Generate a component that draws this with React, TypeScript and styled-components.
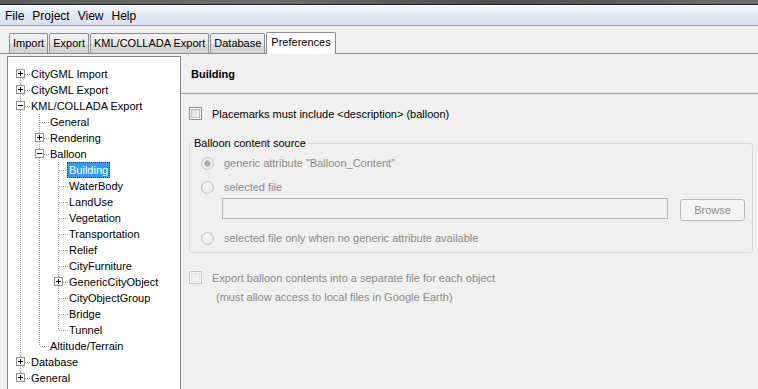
import React from 'react';
import styled, { createGlobalStyle, css } from 'styled-components';

const Global = createGlobalStyle`
  html, body { margin: 0; padding: 0; background: #f0f0f0; }
  body { font-family: "Liberation Sans", Arial, sans-serif; font-size: 11px; color: #000; overflow: hidden; }
  * { box-sizing: border-box; }
`;

const Window = styled.div`
  width: 758px;
  height: 389px;
  display: flex;
  flex-direction: column;
  overflow: hidden;
  background: #f0f0f0;
`;

const TitleStrip = styled.div`
  flex: none;
  height: 5px;
  background: linear-gradient(90deg, #5c5c5c, #6e6e6e 35%, #4e4e4e 65%, #707070);
  border-bottom: 1px solid #1e1e1e;
`;

const MenuBar = styled.div`
  flex: none;
  height: 21px;
  display: flex;
  align-items: center;
  padding: 1px 0 0 1px;
  background: linear-gradient(#f6f9fd, #e4ebf7 45%, #d6def2);
  border-bottom: 1px solid #a0a0a0;
  font-size: 12px;
`;

const MenuItem = styled.span`
  padding: 0 4px;
`;

const TabStrip = styled.div`
  flex: none;
  height: 28px;
  display: flex;
  align-items: flex-end;
  gap: 1px;
  padding-left: 9px;
  background: #efefef;
  border-bottom: 1px solid #898c95;
`;

const Tab = styled.div<{ $active?: boolean }>`
  height: 20px;
  padding: 3px 3px 0;
  border: 1px solid #898c95;
  border-bottom: none;
  border-radius: 2px 2px 0 0;
  background: linear-gradient(#f3f3f3, #ebebeb 50%, #dcdcdc 51%, #d2d2d2);
  white-space: nowrap;
  ${(p) =>
    p.$active &&
    css`
      height: 22px;
      margin-bottom: -1px;
      padding: 3px 4px 0;
      background: #ffffff;
      position: relative;
      z-index: 1;
    `}
`;

const Body = styled.div`
  flex: 1;
  display: flex;
  padding: 2px 0 0 7px;
  min-height: 0;
`;

const TreePanel = styled.div`
  flex: none;
  width: 174px;
  background: #ffffff;
  border: 1px solid #828790;
  border-bottom: none;
  padding: 9px 0 0 3px;
`;

const dotV = (h: string, pos: string) =>
  `repeating-linear-gradient(to bottom, #a0a0a0 0 1px, transparent 1px 2px) ${pos} / 1px ${h} no-repeat`;
const dotH = `repeating-linear-gradient(to right, #a0a0a0 0 1px, transparent 1px 2px) 10px 8px / 9px 1px no-repeat`;

const TreeRow = styled.div`
  display: flex;
  height: 16px;
  align-items: stretch;
`;

const Guide = styled.div<{ $line: boolean }>`
  width: 19px;
  flex: none;
  background: ${(p) => (p.$line ? dotV('100%', '9px 0') : 'none')};
`;

const Connector = styled.div<{ $up: boolean; $down: boolean }>`
  width: 19px;
  flex: none;
  display: flex;
  align-items: center;
  justify-content: center;
  background: ${(p) =>
    [dotH, p.$up ? dotV('8px', '9px 0') : null, p.$down ? dotV('8px', '9px 8px') : null]
      .filter(Boolean)
      .join(', ')};
`;

const Expander = styled.div<{ $open: boolean }>`
  width: 9px;
  height: 9px;
  margin-top: -1px;
  border: 1px solid #919191;
  background: ${(p) =>
    p.$open
      ? 'linear-gradient(#000,#000) center / 5px 1px no-repeat, #fff'
      : 'linear-gradient(#000,#000) center / 5px 1px no-repeat, linear-gradient(#000,#000) center / 1px 5px no-repeat, #fff'};
`;

const NodeLabel = styled.span<{ $selected?: boolean }>`
  margin-left: -1px;
  padding: 0 1px;
  line-height: 14px;
  height: 16px;
  border: 1px solid transparent;
  white-space: nowrap;
  ${(p) =>
    p.$selected &&
    css`
      background: #3399ff;
      color: #ffffff;
      border: 1px dotted #3a3a52;
    `}
`;

const RightPanel = styled.div`
  flex: 1;
  display: flex;
  flex-direction: column;
  background: #f0f0f0;
  min-width: 0;
`;

const Header = styled.div`
  flex: none;
  height: 38px;
  display: flex;
  align-items: center;
  padding: 0 0 1px 10px;
  font-weight: bold;
  border-bottom: 1px solid #a0a0a0;
`;

const Content = styled.div`
  display: flex;
  flex-direction: column;
  padding: 11px 5px 0 8px;
`;

const CheckRow = styled.div<{ $disabled?: boolean; $top?: number }>`
  display: flex;
  align-items: center;
  height: 17px;
  gap: 10px;
  margin-top: ${(p) => p.$top ?? 0}px;
  color: ${(p) => (p.$disabled ? '#8a8a8a' : '#000')};
`;

const CheckBox = styled.span<{ $disabled?: boolean }>`
  flex: none;
  width: 13px;
  height: 13px;
  border: 1px solid ${(p) => (p.$disabled ? '#c3c3c3' : '#8e8f8f')};
  background: ${(p) =>
    p.$disabled
      ? 'linear-gradient(135deg, #ececec, #f7f7f7)'
      : 'linear-gradient(135deg, #cfcfcf, #f2f2f2 70%, #fafafa)'};
  box-shadow: inset 0 0 0 1px ${(p) => (p.$disabled ? '#f8f8f8' : '#f4f4f4')},
    inset 0 0 0 2px ${(p) => (p.$disabled ? '#e2e2e2' : '#bcbcbc')};
`;

const Note = styled.div`
  height: 16px;
  line-height: 16px;
  margin-top: 3px;
  padding-left: 27px;
  color: #8a8a8a;
`;

const Group = styled.fieldset`
  margin: 15px 0 0 0;
  padding: 3px 7px 4px 11px;
  border: 1px solid #d9d9d9;
  border-radius: 3px;
  display: flex;
  flex-direction: column;
  min-width: 0;
`;

const GroupTitle = styled.legend`
  padding: 0 2px;
  margin-left: -9px;
  line-height: 13px;
  color: #000;
`;

const RadioRow = styled.div<{ $top?: number }>`
  display: flex;
  align-items: center;
  height: 20px;
  gap: 10px;
  margin-top: ${(p) => p.$top ?? 0}px;
  color: #8a8a8a;
`;

const Radio = styled.span<{ $checked?: boolean }>`
  flex: none;
  width: 13px;
  height: 13px;
  border-radius: 50%;
  border: 1px solid #c2c2c2;
  background: ${(p) =>
    p.$checked
      ? 'radial-gradient(circle, #a8a8a8 0 2.2px, #d0d0d0 2.8px 3.3px, #ebebeb 3.8px, #f3f3f3)'
      : 'radial-gradient(circle at 40% 35%, #f8f8f8, #e4e4e4)'};
`;

const FileRow = styled.div`
  display: flex;
  align-items: flex-start;
  margin-top: 1px;
  padding-left: 21px;
`;

const FileField = styled.div`
  flex: 1;
  height: 21px;
  border: 1px solid #b4b4b4;
  background: #f0f0f0;
`;

const BrowseButton = styled.div`
  flex: none;
  width: 65px;
  height: 22px;
  margin: 1px 0 0 12px;
  display: flex;
  align-items: center;
  justify-content: center;
  border: 1px solid #b9b9b9;
  border-radius: 3px;
  background: #f4f4f4;
  color: #8a8a8a;
`;

type TreeNode = {
  label: string;
  guides: boolean[];
  exp?: 'open' | 'closed';
  up: boolean;
  down: boolean;
  selected?: boolean;
};

const nodes: TreeNode[] = [
  { label: 'CityGML Import', guides: [], exp: 'closed', up: false, down: true },
  { label: 'CityGML Export', guides: [], exp: 'closed', up: true, down: true },
  { label: 'KML/COLLADA Export', guides: [], exp: 'open', up: true, down: true },
  { label: 'General', guides: [true], up: true, down: true },
  { label: 'Rendering', guides: [true], exp: 'closed', up: true, down: true },
  { label: 'Balloon', guides: [true], exp: 'open', up: true, down: true },
  { label: 'Building', guides: [true, true], up: true, down: true, selected: true },
  { label: 'WaterBody', guides: [true, true], up: true, down: true },
  { label: 'LandUse', guides: [true, true], up: true, down: true },
  { label: 'Vegetation', guides: [true, true], up: true, down: true },
  { label: 'Transportation', guides: [true, true], up: true, down: true },
  { label: 'Relief', guides: [true, true], up: true, down: true },
  { label: 'CityFurniture', guides: [true, true], up: true, down: true },
  { label: 'GenericCityObject', guides: [true, true], exp: 'closed', up: true, down: true },
  { label: 'CityObjectGroup', guides: [true, true], up: true, down: true },
  { label: 'Bridge', guides: [true, true], up: true, down: true },
  { label: 'Tunnel', guides: [true, true], up: true, down: false },
  { label: 'Altitude/Terrain', guides: [true], up: true, down: false },
  { label: 'Database', guides: [], exp: 'closed', up: true, down: true },
  { label: 'General', guides: [], exp: 'closed', up: true, down: false },
];

const tabs = ['Import', 'Export', 'KML/COLLADA Export', 'Database', 'Preferences'];

export default function App() {
  return (
    <>
      <Global />
      <Window>
        <TitleStrip />
        <MenuBar>
          <MenuItem>File</MenuItem>
          <MenuItem>Project</MenuItem>
          <MenuItem>View</MenuItem>
          <MenuItem>Help</MenuItem>
        </MenuBar>
        <TabStrip>
          {tabs.map((t) => (
            <Tab key={t} $active={t === 'Preferences'}>
              {t}
            </Tab>
          ))}
        </TabStrip>
        <Body>
          <TreePanel>
            {nodes.map((n, i) => (
              <TreeRow key={i}>
                {n.guides.map((g, j) => (
                  <Guide key={j} $line={g} />
                ))}
                <Connector $up={n.up} $down={n.down}>
                  {n.exp && <Expander $open={n.exp === 'open'} />}
                </Connector>
                <NodeLabel $selected={n.selected}>{n.label}</NodeLabel>
              </TreeRow>
            ))}
          </TreePanel>
          <RightPanel>
            <Header>Building</Header>
            <Content>
              <CheckRow>
                <CheckBox />
                <span>Placemarks must include &lt;description&gt; (balloon)</span>
              </CheckRow>
              <Group>
                <GroupTitle>Balloon content source</GroupTitle>
                <RadioRow>
                  <Radio $checked />
                  <span>generic attribute "Balloon_Content"</span>
                </RadioRow>
                <RadioRow $top={4}>
                  <Radio />
                  <span>selected file</span>
                </RadioRow>
                <FileRow>
                  <FileField />
                  <BrowseButton>Browse</BrowseButton>
                </FileRow>
                <RadioRow $top={7}>
                  <Radio />
                  <span>selected file only when no generic attribute available</span>
                </RadioRow>
              </Group>
              <CheckRow $disabled $top={16}>
                <CheckBox $disabled />
                <span>Export balloon contents into a separate file for each object</span>
              </CheckRow>
              <Note>(must allow access to local files in Google Earth)</Note>
            </Content>
          </RightPanel>
        </Body>
      </Window>
    </>
  );
}
